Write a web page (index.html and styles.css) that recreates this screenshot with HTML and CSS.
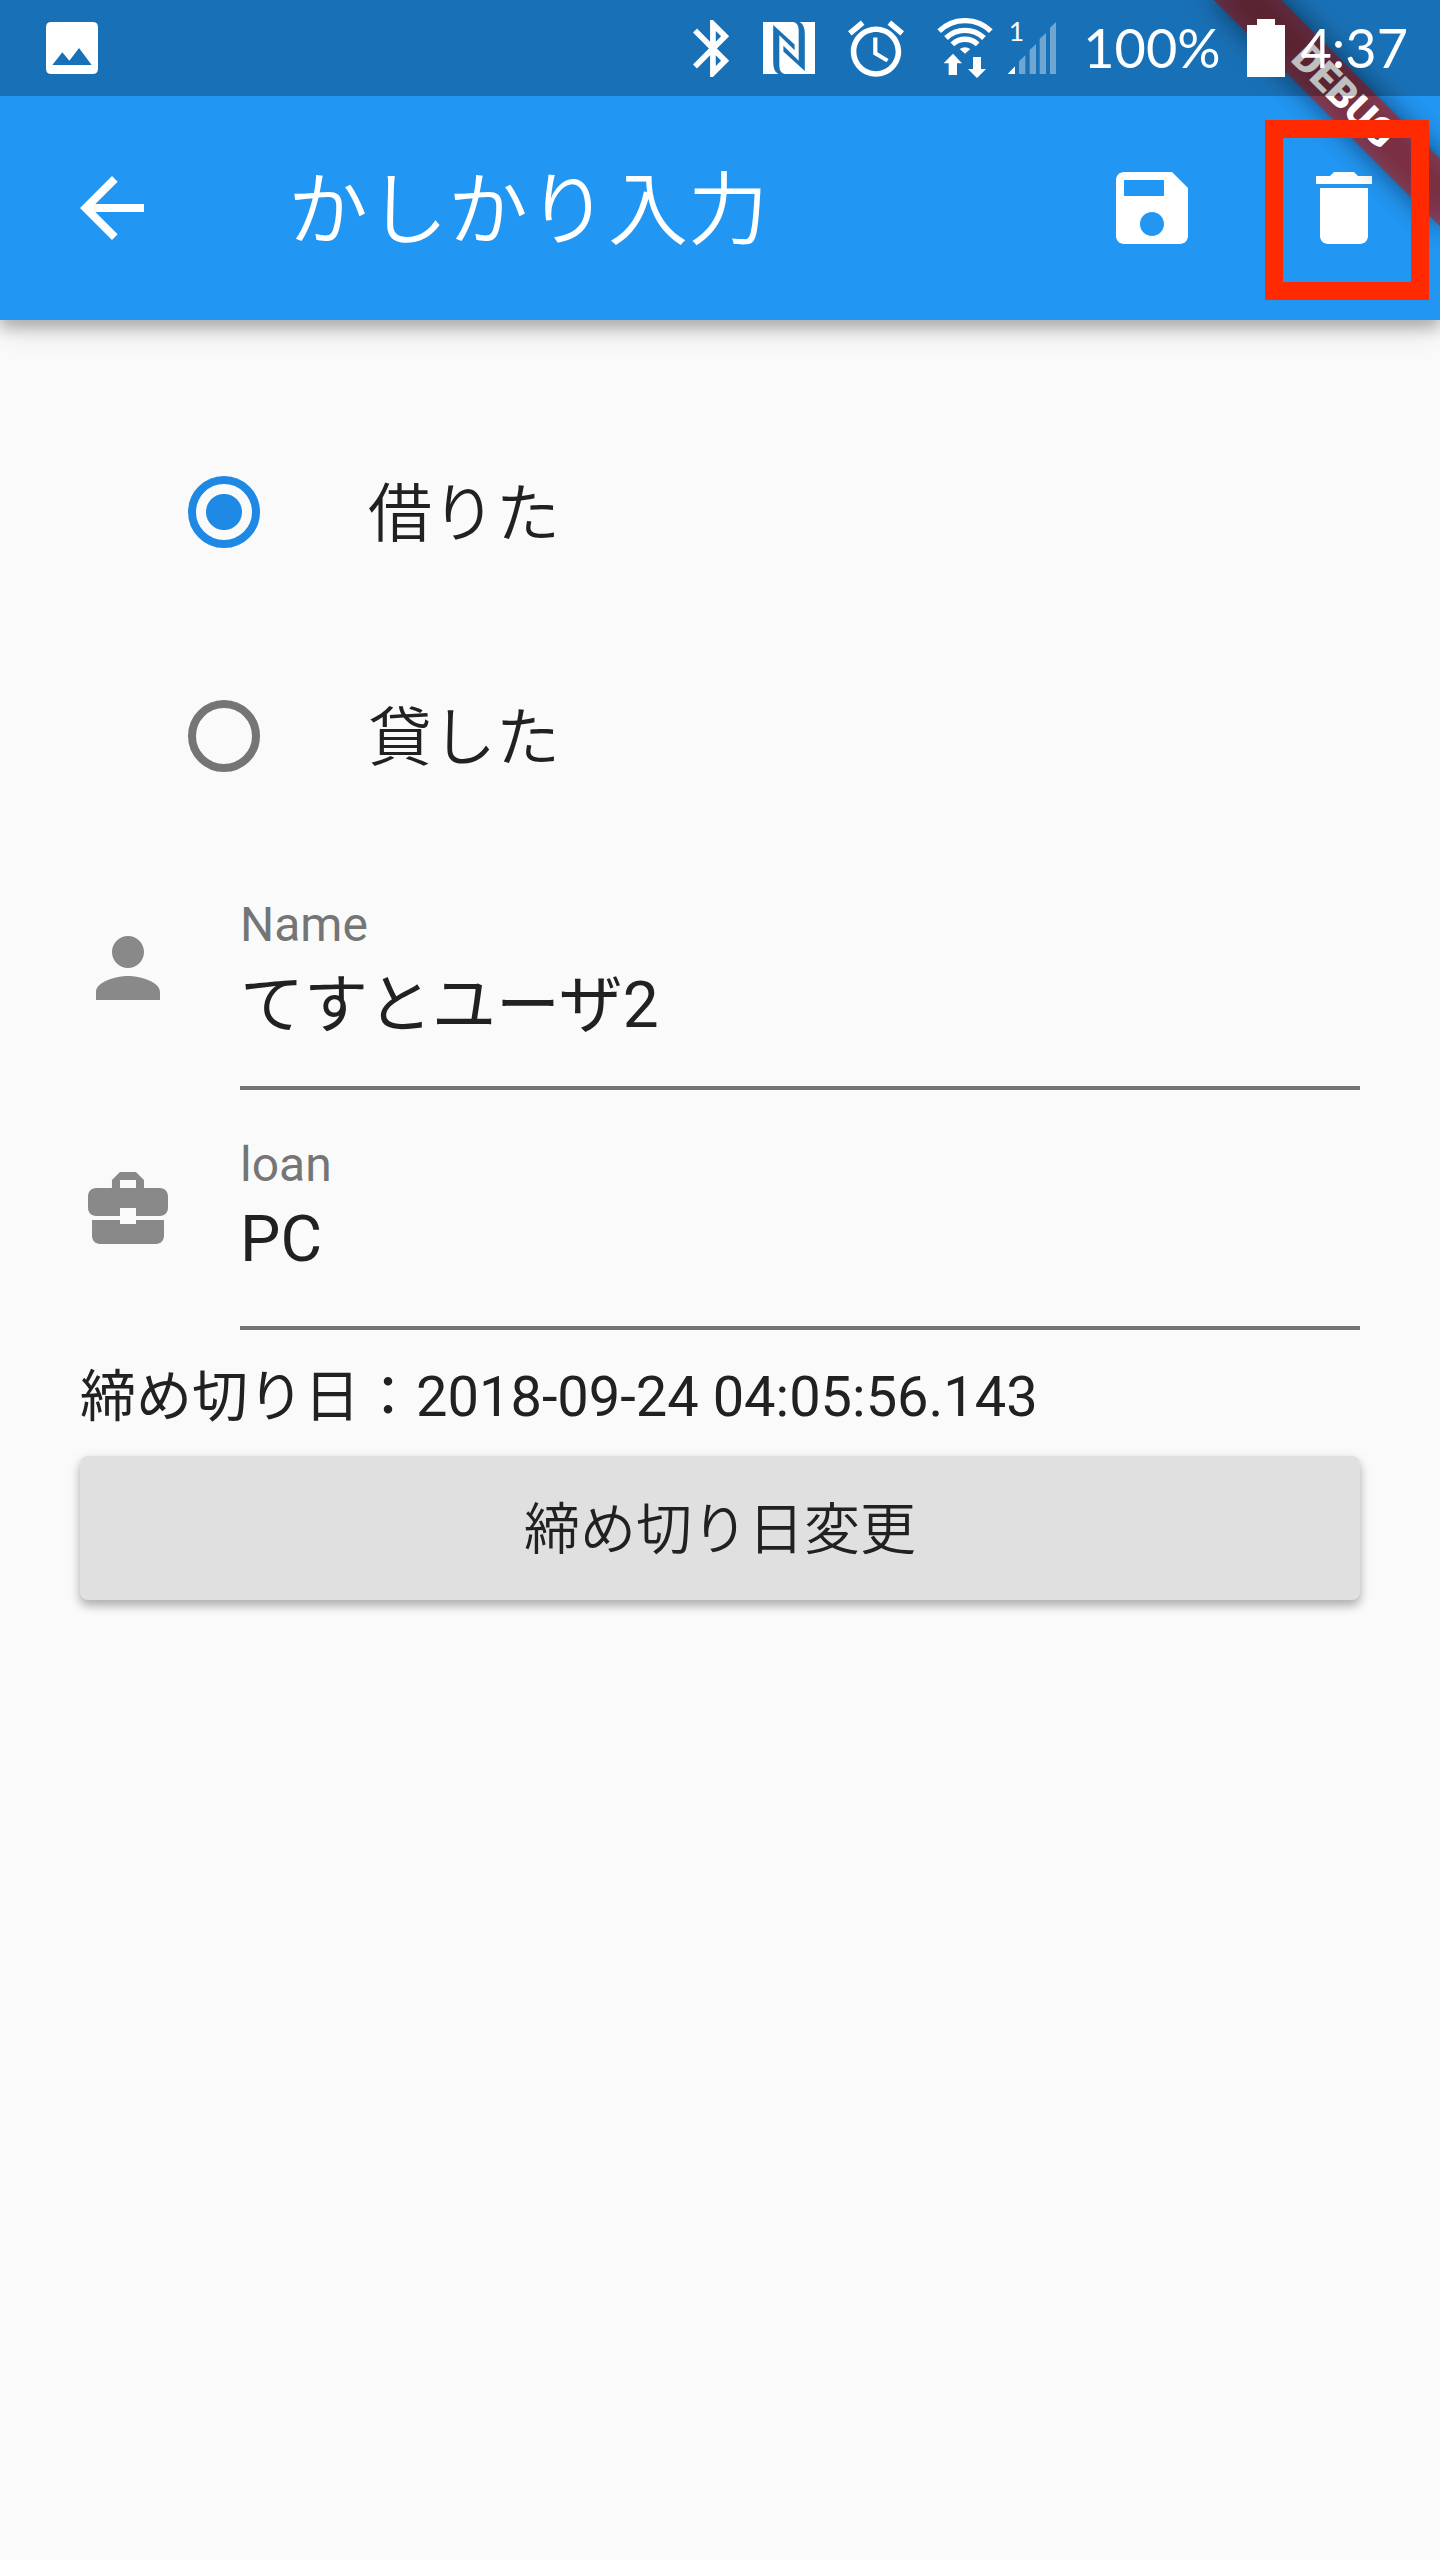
FILE: index.html
```html
<!DOCTYPE html>
<html lang="ja">
<head>
<meta charset="utf-8">
<meta name="viewport" content="width=device-width, initial-scale=1">
<title>かしかり入力</title>
<link rel="stylesheet" href="styles.css">
</head>
<body>
<header class="top">
  <div class="status-bar">
    <svg class="icon-square" viewBox="138 66 156 156" aria-hidden="true"><path fill-rule="evenodd" d="M154 66H278Q294 66 294 82V206Q294 222 278 222H154Q138 222 138 206V82Q138 66 154 66ZM157 195H275L237 144 208 182 187 157Z"/></svg>
    <div class="status-items">
      <svg class="icon-bluetooth" viewBox="5 2 13 20" aria-hidden="true"><path d="M17.71 7.71L12 2h-1v7.59L6.41 5 5 6.41 10.59 12 5 17.59 6.41 19 11 14.41V22h1l5.71-5.71-4.3-4.29 4.3-4.29zM13 5.83l1.88 1.88L13 9.59V5.83zm1.88 10.46L13 18.17v-3.76l1.88 1.88z"/></svg>
      <svg class="icon-square" viewBox="309 69 153 153" aria-hidden="true"><path fill-rule="evenodd" d="M309 69H462V222H309ZM339 78V186Q339 215 354 222H372Q357 218 357 198V108L402 152V135ZM432 213V105Q432 76 417 69H399Q414 73 414 93V183L369 139V156Z"/></svg>
      <svg class="icon-alarm" viewBox="2 1.8 20 20.2" aria-hidden="true"><path d="M22 5.72l-4.6-3.86-1.29 1.53 4.6 3.86L22 5.72zM7.88 3.39L6.6 1.86 2 5.71l1.29 1.53 4.59-3.85zM12.5 8H11v6l4.75 2.85.75-1.23-4-2.37V8zM12 4c-4.97 0-9 4.03-9 9s4.02 9 9 9c4.97 0 9-4.03 9-9s-4.03-9-9-9zm0 16c-3.87 0-7-3.13-7-7s3.13-7 7-7 7 3.13 7 7-3.13 7-7 7z"/></svg>
      <div class="readings">
        <div class="network">
          <svg class="icon-wifi" viewBox="828 53 168 180" aria-hidden="true">
            <g fill="none" stroke="#fff" stroke-width="16"><path d="M834.500 92.500A111 111 0 0 1 989.500 92.500"/><path d="M855 113A82 82 0 0 1 969 113"/><path d="M874 132A55 55 0 0 1 950 132"/></g>
            <path d="M896 146Q912 136 928 146L912 160ZM876 160L903 189H888V224H863V189H848ZM960 170V206H975L948 233 921 206H936V170Z"/>
          </svg>
          <svg class="icon-signal" viewBox="1041 66 150 156" aria-hidden="true">
            <text x="1046" y="123">1</text>
            <path d="M1043 222L1065 199V222Z"/>
            <path opacity=".38" d="M1077 222V184L1096 166V222ZM1109 222V150L1128 132V222ZM1139 222V116L1158 99V222ZM1170 222V83L1188 66V222Z"/>
          </svg>
        </div>
        <span>100%</span>
        <div class="battery">
          <svg class="icon-battery" viewBox="558 57 114 174" aria-hidden="true"><path d="M588 57H642V75H672V231H558V75H588Z"/></svg>
          <time>4:37</time>
        </div>
      </div>
    </div>
  </div>
  <div class="app-bar">
    <button class="icon-button" type="button" aria-label="戻る"><svg viewBox="0 0 24 24"><path d="M20 11H7.830l5.590-5.590L12 4l-8 8 8 8 1.410-1.410L7.830 13H20v-2z"/></svg></button>
    <h1 class="title">かしかり入力</h1>
    <button class="icon-button" type="button" aria-label="保存"><svg viewBox="0 0 24 24"><path d="M17 3H5c-1.110 0-2 .9-2 2v14c0 1.100.89 2 2 2h14c1.100 0 2-.9 2-2V7l-4-4zm-5 16c-1.660 0-3-1.340-3-3s1.340-3 3-3 3 1.340 3 3-1.340 3-3 3zm3-10H5V5h10v4z"/></svg></button>
    <button class="icon-button marked" type="button" aria-label="削除"><svg viewBox="0 0 24 24"><path d="M6 19c0 1.100.9 2 2 2h8c1.100 0 2-.9 2-2V7H6v12zM19 4h-3.500l-1-1h-5l-1 1H5v2h14V4z"/></svg></button>
  </div>
  <div class="banner"><div class="ribbon"><span>DEBUG</span></div></div>
</header>
<main>
  <form class="form">
    <div class="choices" role="radiogroup" aria-label="種別">
      <label class="choice"><input type="radio" name="kind" value="borrow" checked><span>借りた</span></label>
      <label class="choice"><input type="radio" name="kind" value="lend"><span>貸した</span></label>
    </div>
    <div class="field">
      <svg viewBox="0 0 24 24" aria-hidden="true"><path d="M12 12c2.210 0 4-1.790 4-4s-1.790-4-4-4-4 1.790-4 4 1.790 4 4 4zm0 2c-2.670 0-8 1.340-8 4v2h16v-2c0-2.660-5.330-4-8-4z"/></svg>
      <div class="field-body">
        <label for="name">Name</label>
        <input id="name" type="text" value="てすとユーザ2">
      </div>
    </div>
    <div class="field">
      <svg viewBox="0 0 24 24" aria-hidden="true"><path d="M10 16v-1H3.010L3 19c0 1.110.89 2 2 2h14c1.110 0 2-.89 2-2v-4h-7v1h-4zm10-9h-4.010V5l-2-2h-4l-2 2v2H4c-1.100 0-2 .9-2 2v3c0 1.110.89 2 2 2h6v-2h4v2h6c1.100 0 2-.9 2-2V9c0-1.100-.9-2-2-2zm-6 0h-4V5h4v2z"/></svg>
      <div class="field-body">
        <label for="loan">loan</label>
        <input id="loan" type="text" value="PC">
      </div>
    </div>
    <p class="deadline">締め切り日：2018-09-24 04:05:56.143</p>
    <button class="change" type="button">締め切り日変更</button>
  </form>
</main>
</body>
</html>
```
FILE: styles.css
```css
*,
*::before,
*::after {
  box-sizing: border-box;
}

body {
  margin: 0;
  min-height: 100vh;
  background: #fafafa;
  color: #212121;
  font-family: Roboto, "Noto Sans CJK JP", sans-serif;
}

button,
input {
  margin: 0;
  border: 0;
  padding: 0;
  background: none;
  color: inherit;
  font: inherit;
}

svg {
  display: block;
  flex: none;
  fill: currentColor;
}

/* Header */
.top {
  position: relative;
  background: #2196f3;
  color: #fff;
  box-shadow: 0 8px 12px rgba(0, 0, 0, 0.2), 0 12px 24px rgba(0, 0, 0, 0.14);
}

.status-bar {
  position: relative;
  z-index: 2;
  display: flex;
  align-items: center;
  justify-content: space-between;
  height: 96px;
  padding: 0 32px 0 46px;
  background: rgba(0, 0, 0, 0.25);
  font: 54px/92px Lato, sans-serif;
}

.status-items,
.readings,
.network,
.battery {
  display: flex;
  align-items: center;
}

.status-items {
  gap: 33px;
}

.readings {
  gap: 26px;
}

.network {
  gap: 14px;
}

.battery {
  gap: 16px;
}

.icon-square {
  width: 52px;
  height: 52px;
}

.icon-bluetooth {
  width: 37px;
  height: 57px;
}

.icon-alarm {
  width: 56px;
  height: 57px;
}

.icon-wifi {
  width: 56px;
  height: 60px;
}

.icon-signal {
  width: 50px;
  height: 52px;
  overflow: visible;
}

.icon-signal text {
  font: 80px Lato, sans-serif;
}

.icon-battery {
  width: 38px;
  height: 58px;
}

.app-bar {
  display: flex;
  align-items: center;
  height: 224px;
  padding-left: 16px;
}

.icon-button {
  position: relative;
  display: grid;
  place-items: center;
  width: 192px;
  height: 192px;
}

.icon-button svg,
.field svg {
  width: 96px;
  height: 96px;
}

.title {
  flex: 1;
  margin: 0;
  padding: 6px 0 0 80px;
  font-size: 80px;
  font-weight: 350;
  line-height: 96px;
}

/* Highlight frame around the delete action */
.marked::after {
  content: "";
  position: absolute;
  z-index: 3;
  top: 8px;
  right: 11px;
  width: 164px;
  height: 180px;
  border: 18px solid #ff2a00;
}

/* Corner ribbon */
.banner {
  position: absolute;
  z-index: 1;
  top: 0;
  right: 0;
  width: 320px;
  height: 320px;
  overflow: hidden;
  pointer-events: none;
}

.ribbon {
  position: absolute;
  top: 112px;
  right: -160px;
  width: 320px;
  height: 48px;
  transform: rotate(45deg);
  transform-origin: 50% -112px;
}

.ribbon::before,
.ribbon span {
  position: absolute;
  inset: 0;
}

.ribbon::before {
  content: "";
  background: rgba(0, 0, 0, 0.5);
  filter: blur(14px);
}

.ribbon span {
  background: rgba(183, 28, 28, 0.63);
  font-size: 40px;
  font-weight: 900;
  line-height: 48px;
  text-align: center;
}

/* Form */
.form {
  display: flex;
  flex-direction: column;
  padding: 80px;
}

.choices {
  margin-bottom: 2px;
}

.choice {
  display: flex;
  align-items: center;
  gap: 108px;
  height: 224px;
  padding-left: 108px;
  font-size: 64px;
  font-weight: 350;
  line-height: 96px;
}

.choice span {
  padding-top: 6px;
}

.choice input {
  appearance: none;
  display: grid;
  place-items: center;
  width: 72px;
  height: 72px;
  border: 8px solid #757575;
  border-radius: 50%;
}

.choice input:checked {
  border-color: #1e88e5;
}

.choice input:checked::before {
  content: "";
  width: 36px;
  height: 36px;
  border-radius: 50%;
  background: #1e88e5;
}

.field {
  display: flex;
  gap: 64px;
}

.field svg {
  margin-top: 70px;
  fill: #898989;
}

.field-body {
  display: flex;
  flex: 1;
  flex-direction: column;
  min-width: 0;
  padding-top: 47px;
}

.field label {
  color: #757575;
  font-size: 48px;
  line-height: 56px;
}

.field input {
  width: 100%;
  height: 137px;
  padding-bottom: 41px;
  border-bottom: 4px solid #737373;
  outline: 0;
  font-size: 64px;
  line-height: 92px;
}

.deadline {
  margin: 0;
  padding: 31px 0 23px;
  font-size: 56px;
  line-height: 72px;
}

.change {
  height: 144px;
  padding-bottom: 8px;
  border-radius: 8px;
  background: #e0e0e0;
  box-shadow: 0 6px 8px rgba(0, 0, 0, 0.2), 0 4px 14px rgba(0, 0, 0, 0.14);
  font-size: 56px;
  font-weight: 350;
}
```
